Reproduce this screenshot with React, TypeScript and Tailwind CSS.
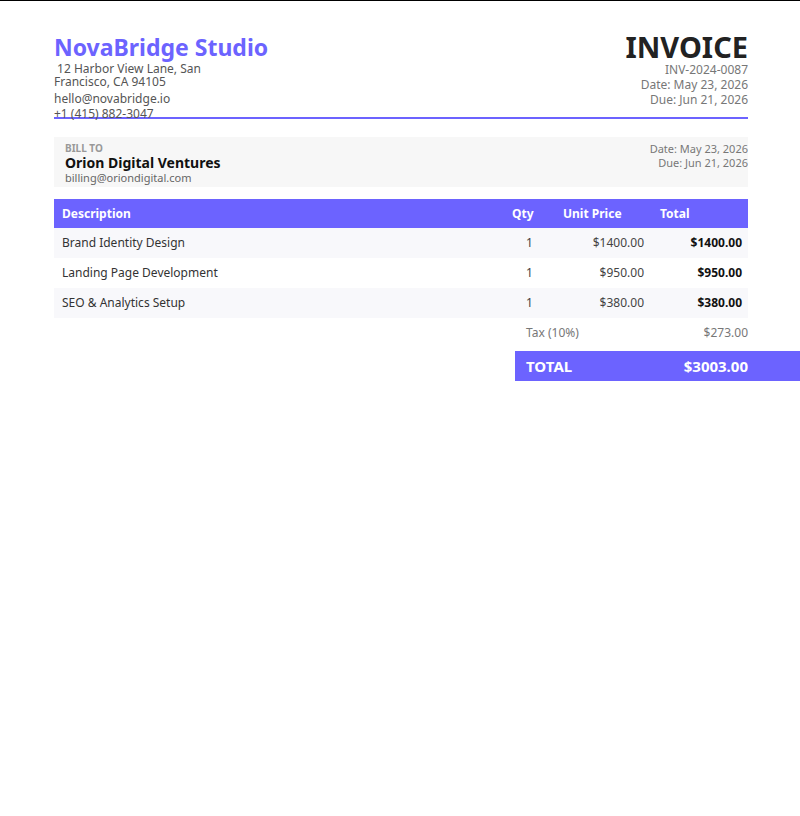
export default function App() {
  const items = [
    { d: 'Brand Identity Design', q: 1, p: '$1400.00', t: '$1400.00' },
    { d: 'Landing Page Development', q: 1, p: '$950.00', t: '$950.00' },
    { d: 'SEO & Analytics Setup', q: 1, p: '$380.00', t: '$380.00' },
  ];
  return (
    <div className="min-h-[816px] w-[800px] overflow-hidden border-t border-black bg-white font-['Liberation_Sans']">
      <div className="pl-[54px] pr-[52px] pt-[31px]">
        <div className="flex h-[87px] justify-between border-b-2 border-[#6c63ff]">
          <div>
            <h1 className="text-[23px] font-bold leading-[30px] text-[#6c63ff]">NovaBridge Studio</h1>
            <p className="w-[150px] text-[12px] leading-[13px] text-[#555]">&nbsp;12 Harbor View Lane, San Francisco, CA 94105</p>
            <p className="mt-[3px] text-[12px] leading-[15px] text-[#555]">hello@novabridge.io</p>
            <p className="text-[12px] leading-[15px] text-[#555]">+1 (415) 882-3047</p>
          </div>
          <div className="text-right">
            <h2 className="text-[29px] font-bold leading-[30px] text-[#222]">INVOICE</h2>
            <p className="text-[12px] leading-[15px] text-[#777]">INV-2024-0087</p>
            <p className="text-[12px] leading-[15px] text-[#777]">Date: May 23, 2026</p>
            <p className="text-[12px] leading-[15px] text-[#777]">Due: Jun 21, 2026</p>
          </div>
        </div>

        <div className="mt-[18px] flex justify-between bg-[#f7f7f7] pl-[11px] pt-[5px] pb-[2px]">
          <div>
            <p className="text-[10px] font-bold uppercase leading-[12px] text-[#999]">Bill to</p>
            <p className="text-[14px] font-bold leading-[17px] text-[#111]">Orion Digital Ventures</p>
            <p className="text-[11px] leading-[14px] text-[#666]">billing@oriondigital.com</p>
          </div>
          <div className="text-right text-[11px] leading-[14px] text-[#777]">
            <p>Date: May 23, 2026</p>
            <p>Due: Jun 21, 2026</p>
          </div>
        </div>

        <table className="mt-[12px] w-full border-collapse text-[12px]">
          <thead>
            <tr className="h-[29px] bg-[#6c63ff] text-left font-bold text-white">
              <th className="pl-2">Description</th>
              <th className="w-[58px] pl-[12px] text-left">Qty</th>
              <th className="w-[92px] pl-[5px] text-left">Unit Price</th>
              <th className="w-[98px] pl-[10px] text-left">Total</th>
            </tr>
          </thead>
          <tbody>
            {items.map((it, i) => (
              <tr key={it.d} className={`h-[30px] ${i % 2 === 0 ? 'bg-[#f8f8fb]' : 'bg-white'}`}>
                <td className="pl-2 text-[#333]">{it.d}</td>
                <td className="pl-[26px] text-[#444]">{it.q}</td>
                <td className="pr-[6px] text-right text-[#444]">{it.p}</td>
                <td className="pr-[6px] text-right font-bold text-[#111]">{it.t}</td>
              </tr>
            ))}
          </tbody>
        </table>

        <div className="ml-auto w-[233px]">
          <div className="flex h-[30px] items-center justify-between pl-[11px] text-[12px] text-[#777]">
            <span>Tax (10%)</span>
            <span>$273.00</span>
          </div>
          <div className="mt-[3px] flex h-[30px] w-[285px] items-center justify-between bg-[#6c63ff] pl-[11px] pr-[52px] text-[15px] font-bold text-white">
            <span>TOTAL</span>
            <span>$3003.00</span>
          </div>
        </div>
      </div>
    </div>
  );
}
